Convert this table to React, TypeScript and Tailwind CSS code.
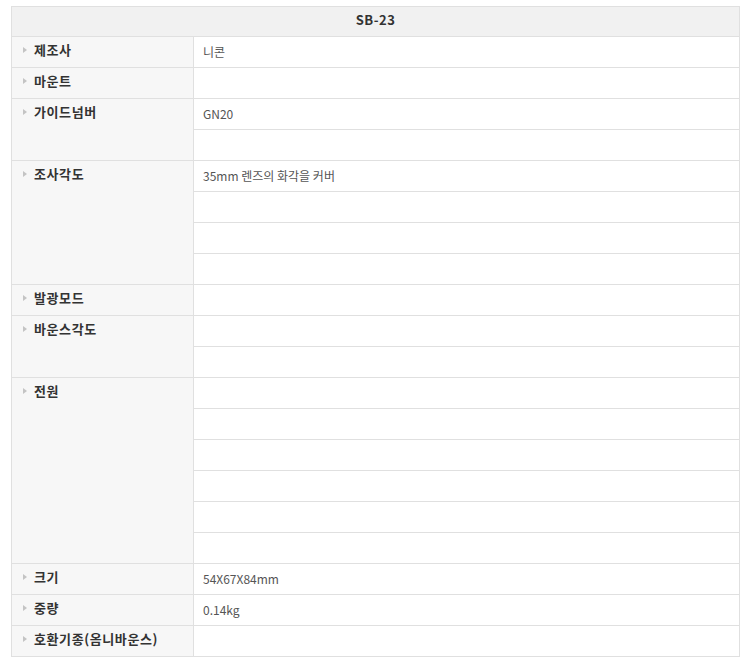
type Spec = {
  label: string
  values: string[]
}

const specs: Spec[] = [
  { label: '제조사', values: ['니콘'] },
  { label: '마운트', values: [''] },
  { label: '가이드넘버', values: ['GN20', ''] },
  { label: '조사각도', values: ['35mm 렌즈의 화각을 커버', '', '', ''] },
  { label: '발광모드', values: [''] },
  { label: '바운스각도', values: ['', ''] },
  { label: '전원', values: ['', '', '', '', '', ''] },
  { label: '크기', values: ['54X67X84mm'] },
  { label: '중량', values: ['0.14kg'] },
  { label: '호환기종(옴니바운스)', values: [''] },
]

const rowSpan: Record<number, string> = {
  1: 'row-span-1',
  2: 'row-span-2',
  4: 'row-span-4',
  6: 'row-span-6',
}

function Bullet() {
  return (
    <svg width="4" height="6" viewBox="0 0 4 6" className="mr-[7px] shrink-0">
      <path d="M0 0 L4 3 L0 6 Z" fill="#c4c4c4" />
    </svg>
  )
}

export default function App() {
  return (
    <div
      className="min-h-[661px] bg-white pt-[6px] pl-[11px]"
      style={{ fontFamily: '"Noto Sans CJK KR", "Noto Sans", sans-serif' }}
    >
      <div className="grid w-[729px] grid-cols-[182px_1fr] border-x border-t border-[#e0e0e0]">
        <div className="col-span-2 h-[30px] border-b border-[#e0e0e0] bg-[#f1f1f1] text-center text-[13px] font-bold leading-[25px] tracking-[0.5px] text-[#333]">
          SB-23
        </div>

        {specs.map((spec) => (
          <SpecGroup key={spec.label} spec={spec} />
        ))}
      </div>
    </div>
  )
}

function SpecGroup({ spec }: { spec: Spec }) {
  return (
    <>
      <div
        className={`col-start-1 ${rowSpan[spec.values.length]} flex border-r border-b border-[#e0e0e0] bg-[#f7f7f7] pl-[11px]`}
      >
        <div className="flex h-[26px] items-center text-[13px] font-bold tracking-[0.6px] text-[#333]">
          <Bullet />
          {spec.label}
        </div>
      </div>
      {spec.values.map((value, i) => (
        <div
          key={i}
          className="col-start-2 h-[31px] border-b border-[#e0e0e0] pl-[9px] text-[12px] leading-[30px] text-[#555]"
        >
          {value}
        </div>
      ))}
    </>
  )
}
